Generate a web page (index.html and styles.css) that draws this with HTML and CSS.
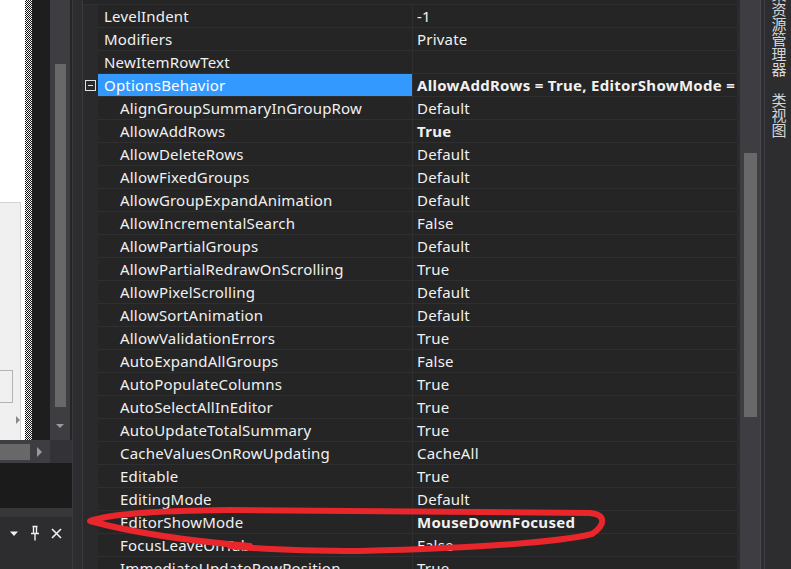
FILE: index.html
```html
<html>
<head>
    <meta charset="utf-8">
    <title>属性</title>
    <link rel="stylesheet" href="styles.css">
</head>
<body>
<div class="ide">
    <div class="left">
        <div class="designer">
            <div class="surface">
                <div class="panel">
                    <div class="inner"></div>
                    <div class="tri"></div>
                </div>
            </div>
            <div class="hatch"></div>
            <div class="gap"></div>
            <div class="vscroll">
                <div class="thumb"></div>
                <div class="arrow-down"></div>
            </div>
            <div class="line"></div>
        </div>
        <div class="hscroll">
            <div class="htrack">
                <div class="hthumb"></div>
                <div class="arrow-right"></div>
            </div>
            <div class="corner"></div>
        </div>
        <div class="output"></div>
        <div class="sep"></div>
        <div class="bar">
            <svg width="10" height="6" viewBox="0 0 10 6"><path d="M1 0.5h8L5 5z" fill="#f1f1f1"/></svg>
            <svg width="10" height="16" viewBox="0 0 10 16"><path d="M2.5 1.5h5M3.5 1.5v7M6.5 1.5v7M1 8.5h8M5 8.5v7" stroke="#f1f1f1" stroke-width="1.4" fill="none"/></svg>
            <svg width="11" height="11" viewBox="0 0 11 11"><path d="M1 1l9 9M10 1l-9 9" stroke="#f1f1f1" stroke-width="1.6"/></svg>
        </div>
    </div>
    <div class="splitter"></div>
    <div class="grid">
        <div class="rows">
            <div class="row"><span class="gut"></span><span class="name">LevelIndent</span><span class="val">-1</span></div>
            <div class="row"><span class="gut"></span><span class="name">Modifiers</span><span class="val">Private</span></div>
            <div class="row"><span class="gut"></span><span class="name">NewItemRowText</span><span class="val"></span></div>
            <div class="row sel"><span class="gut"><i class="toggle"></i></span><span class="name">OptionsBehavior</span><span class="val b">AllowAddRows = True, EditorShowMode = MouseDownFocused</span></div>
            <div class="row sub"><span class="gut"></span><span class="name">AlignGroupSummaryInGroupRow</span><span class="val">Default</span></div>
            <div class="row sub"><span class="gut"></span><span class="name">AllowAddRows</span><span class="val b">True</span></div>
            <div class="row sub"><span class="gut"></span><span class="name">AllowDeleteRows</span><span class="val">Default</span></div>
            <div class="row sub"><span class="gut"></span><span class="name">AllowFixedGroups</span><span class="val">Default</span></div>
            <div class="row sub"><span class="gut"></span><span class="name">AllowGroupExpandAnimation</span><span class="val">Default</span></div>
            <div class="row sub"><span class="gut"></span><span class="name">AllowIncrementalSearch</span><span class="val">False</span></div>
            <div class="row sub"><span class="gut"></span><span class="name">AllowPartialGroups</span><span class="val">Default</span></div>
            <div class="row sub"><span class="gut"></span><span class="name">AllowPartialRedrawOnScrolling</span><span class="val">True</span></div>
            <div class="row sub"><span class="gut"></span><span class="name">AllowPixelScrolling</span><span class="val">Default</span></div>
            <div class="row sub"><span class="gut"></span><span class="name">AllowSortAnimation</span><span class="val">Default</span></div>
            <div class="row sub"><span class="gut"></span><span class="name">AllowValidationErrors</span><span class="val">True</span></div>
            <div class="row sub"><span class="gut"></span><span class="name">AutoExpandAllGroups</span><span class="val">False</span></div>
            <div class="row sub"><span class="gut"></span><span class="name">AutoPopulateColumns</span><span class="val">True</span></div>
            <div class="row sub"><span class="gut"></span><span class="name">AutoSelectAllInEditor</span><span class="val">True</span></div>
            <div class="row sub"><span class="gut"></span><span class="name">AutoUpdateTotalSummary</span><span class="val">True</span></div>
            <div class="row sub"><span class="gut"></span><span class="name">CacheValuesOnRowUpdating</span><span class="val">CacheAll</span></div>
            <div class="row sub"><span class="gut"></span><span class="name">Editable</span><span class="val">True</span></div>
            <div class="row sub"><span class="gut"></span><span class="name">EditingMode</span><span class="val">Default</span></div>
            <div class="row sub"><span class="gut"></span><span class="name">EditorShowMode</span><span class="val b">MouseDownFocused</span></div>
            <div class="row sub"><span class="gut"></span><span class="name">FocusLeaveOnTab</span><span class="val">False</span></div>
            <div class="row sub"><span class="gut"></span><span class="name">ImmediateUpdateRowPosition</span><span class="val">True</span></div>
        </div>
    </div>
    <div class="gscroll">
        <div class="track"><div class="gthumb"></div></div>
    </div>
    <div class="edge"></div>
    <div class="tabs">
        <span class="tab first">解决方案资源管理器</span>
        <span class="tab">类视图</span>
    </div>
    <!-- red marker drawn over the screenshot -->
    <svg class="mark" width="791" height="569" viewBox="0 0 791 569">
        <path d="M250 546 C190 541 130 532 90 521 C110 514 150 511 230 510 L590 513 C607 515 605 525 592 534 C560 542 470 548 360 551 C300 551 260 549 230 546"
              fill="none" stroke="#e8262b" stroke-width="6" stroke-linecap="round" stroke-linejoin="round"/>
    </svg>
</div>
</body>
</html>
```

FILE: styles.css
```css
body {
    margin: 0;
    background: #2d2d30;
    font-family: "Noto Sans", "Noto Sans CJK SC", sans-serif;
    --rowBg: #252526;
    --rowLine: #2f2f31;
    --text: #f1f1f1;
    --track: #3e3e42;
    --thumb: #686868;
}

.ide {
    position: relative;
    display: flex;
    width: 791px;
    height: 569px;
    overflow: hidden;
}

/* left: designer + tool window */
.left {
    width: 72px;
    display: flex;
    flex-direction: column;
}

.designer {
    height: 440px;
    display: flex;
}

.surface {
    width: 25px;
    background: #fff;
    padding-top: 202px;
    box-sizing: border-box;
}

.panel {
    width: 21px;
    height: 238px;
    box-sizing: border-box;
    background: #f0f0f0;
    border-top: 1px solid #d4d4d4;
    border-right: 1px solid #d4d4d4;
    padding-top: 167px;
}

.inner {
    width: 13px;
    height: 33px;
    box-sizing: border-box;
    border: 1px solid #b4b4b4;
    border-left: 0;
}

.tri {
    width: 0;
    height: 0;
    margin: 13px 0 0 16px;
    border-left: 4px solid #8a8a8a;
    border-top: 4px solid transparent;
    border-bottom: 4px solid transparent;
}

.hatch {
    width: 7px;
    background: repeating-conic-gradient(#111 0 25%, #fff 0 50%) 0 0/2px 2px;
}

.gap {
    width: 18px;
    background: #1e1e1e;
}

.vscroll {
    width: 20px;
    background: var(--track);
    display: flex;
    flex-direction: column;
}

.thumb {
    width: 11px;
    height: 343px;
    margin: 64px 0 0 5px;
    background: var(--thumb);
}

.arrow-down {
    width: 0;
    height: 0;
    margin: 17px 0 0 6px;
    border-top: 4px solid #9a9a9a;
    border-left: 4px solid transparent;
    border-right: 4px solid transparent;
}

.line {
    width: 2px;
    background: #252526;
}

.hscroll {
    height: 23px;
    display: flex;
}

.htrack {
    width: 50px;
    background: var(--track);
    display: flex;
    align-items: center;
}

.hthumb {
    width: 30px;
    height: 16px;
    background: var(--thumb);
}

.arrow-right {
    width: 0;
    height: 0;
    margin-left: 7px;
    border-left: 5px solid #9a9a9a;
    border-top: 5px solid transparent;
    border-bottom: 5px solid transparent;
}

.corner {
    flex: 1;
    background: #333337;
}

.output {
    height: 45px;
    background: #1b1b1c;
}

.sep {
    height: 9px;
    background: #37373a;
}

.bar {
    flex: 1;
    display: flex;
    align-items: flex-start;
    gap: 11px;
    padding: 8px 0 0 9px;
}

.bar svg:first-child {
    margin-top: 6px;
}

.bar svg:last-child {
    margin-top: 3px;
}

.splitter {
    width: 11px;
    box-sizing: border-box;
    background: #2d2d30;
    border-left: 1px solid #3a3a3e;
    border-right: 1px solid #3a3a3e;
}

/* property grid */
.grid {
    width: 654px;
    background: var(--rowBg);
    padding-top: 4px;
}

.rows {
    border-top: 1px solid var(--rowLine);
}

.row {
    display: flex;
    height: 23px;
    font-size: 15px;
    line-height: 22px;
    letter-spacing: 0.2px;
    color: var(--text);
}

.row .gut {
    width: 15px;
    background: #2a2a2c;
}

.row .name,
.row .val {
    box-sizing: border-box;
    border-bottom: 1px solid var(--rowLine);
    white-space: nowrap;
    overflow: hidden;
}

.row .name {
    width: 314px;
    padding-left: 6px;
}

.row .val {
    flex: 1;
    padding-left: 4px;
    border-left: 1px solid var(--rowLine);
}

.row.sub .name {
    padding-left: 22px;
}

.row.sel .name {
    background: #3399ff;
    color: #fff;
}

.val.b {
    font-weight: 700;
    letter-spacing: 0.3px;
}

.toggle {
    display: block;
    width: 11px;
    height: 11px;
    box-sizing: border-box;
    margin: 6px 0 0 2px;
    border: 1px solid #e0e0e0;
}

.toggle::after {
    content: "";
    display: block;
    width: 5px;
    height: 1px;
    margin: 4px 0 0 2px;
    background: #e0e0e0;
}

.gscroll {
    width: 23px;
    box-sizing: border-box;
    padding-left: 3px;
    background: #2b2b2e;
}

.track {
    height: 100%;
    background: var(--track);
    padding-top: 153px;
    box-sizing: border-box;
}

.gthumb {
    width: 13px;
    height: 264px;
    margin-left: 4px;
    background: var(--thumb);
}

.edge {
    width: 5px;
    box-sizing: border-box;
    background: #2d2d30;
    border-left: 1px solid #4a4a4f;
    border-right: 1px solid #3f3f46;
}

.tabs {
    width: 26px;
    background: #2d2d30;
    display: flex;
    flex-direction: column;
    align-items: center;
}

.tab {
    writing-mode: vertical-rl;
    font-size: 15px;
    line-height: 15px;
    color: #d6d6d6;
}

.tab.first {
    margin-top: -58px;
    margin-bottom: 16px;
}

.mark {
    position: absolute;
    left: 0;
    top: 0;
    pointer-events: none;
}
```
